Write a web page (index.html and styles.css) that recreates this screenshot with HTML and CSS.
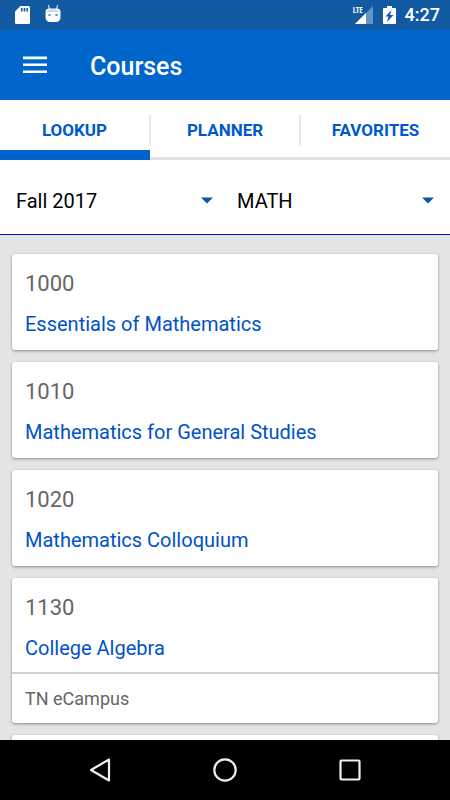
FILE: index.html
```html
<!DOCTYPE html>
<html lang="en">
<head>
<meta charset="utf-8">
<meta name="viewport" content="width=device-width, initial-scale=1">
<title>Courses</title>
<link rel="stylesheet" href="styles.css">
</head>
<body>
<div class="status-bar">
  <svg width="16" height="18" viewBox="0 0 16 18" aria-hidden="true">
    <path fill="#fff" d="M5.500 0H13.500Q15 0 15 1.500V16.500Q15 18 13.500 18H1.500Q0 18 0 16.500V5.500Z"/>
    <path fill="#125ba3" d="M6 2h1.600v3.500H6zM8.700 2h1.600v3.500H8.700zM11.400 2h1.600v3.500h-1.600z"/>
  </svg>
  <svg class="android" width="16" height="18" viewBox="0 0 16 18" aria-hidden="true">
    <path stroke="#fff" stroke-width="1" stroke-linecap="round" d="M3.500 -.5L4.500 3M12.500 -.5L11.500 3"/>
    <path fill="#fff" d="M.5 6Q.5 2.500 4 2.500H12Q15.500 2.500 15.500 6V11Q15.500 16 10.500 16H5.500Q.5 16 .5 11Z"/>
    <path fill="#c5d8ea" d="M2 6Q2.500 3.500 5 3.500H11Q13.500 3.500 14 6Z"/>
    <path fill="#4f85ba" d="M3.500 8h2v2h-2zM10.500 8h2v2h-2z"/>
  </svg>
  <span class="spacer"></span>
  <span class="signal">
    <span class="network">LTE</span>
    <svg width="18" height="18" viewBox="0 0 18 18" aria-hidden="true">
      <path fill="#6595c4" d="M18 0V18H0Z"/>
      <path fill="#fff" d="M11 7V18H0Z"/>
    </svg>
  </span>
  <svg class="battery" width="13" height="18" viewBox="0 0 13 18" aria-hidden="true">
    <path fill="#fff" d="M4 0H9V2H12Q13 2 13 3V17Q13 18 12 18H1Q0 18 0 17V3Q0 2 1 2H4Z"/>
    <path fill="#125ba3" d="M8.500 4L2.500 10.500H5.500L4 16L10.500 9H7Z"/>
  </svg>
  <time class="clock">4:27</time>
</div>

<header class="app-bar">
  <button class="menu-button" type="button" aria-label="Open menu">
    <svg width="24" height="18" viewBox="0 0 24 18" aria-hidden="true">
      <path fill="#fff" d="M0 .6H24V3.200H0zM0 7.500H24V10.100H0zM0 14.400H24V17H0z"/>
    </svg>
  </button>
  <h1>Courses</h1>
</header>

<nav class="tabs">
  <a class="tab active" href="#lookup" aria-current="page"><span>LOOKUP</span></a>
  <a class="tab" href="#planner"><span>PLANNER</span></a>
  <a class="tab" href="#favorites"><span>FAVORITES</span></a>
</nav>

<form class="filters">
  <div class="field">
    <select aria-label="Term"><option>Fall 2017</option></select>
    <svg width="12" height="7" viewBox="0 0 12 7" aria-hidden="true"><path fill="#0d55a8" d="M0 .5H12L6 6.500Z"/></svg>
  </div>
  <div class="field">
    <select aria-label="Subject"><option>MATH</option></select>
    <svg width="12" height="7" viewBox="0 0 12 7" aria-hidden="true"><path fill="#0d55a8" d="M0 .5H12L6 6.500Z"/></svg>
  </div>
</form>

<main class="courses">
  <article class="card">
    <div class="course"><p>1000</p><h2><a href="#1000">Essentials of Mathematics</a></h2></div>
  </article>
  <article class="card">
    <div class="course"><p>1010</p><h2><a href="#1010">Mathematics for General Studies</a></h2></div>
  </article>
  <article class="card">
    <div class="course"><p>1020</p><h2><a href="#1020">Mathematics Colloquium</a></h2></div>
  </article>
  <article class="card">
    <div class="course divided"><p>1130</p><h2><a href="#1130">College Algebra</a></h2></div>
    <p class="campus">TN eCampus</p>
  </article>
  <article class="card"><div class="course"></div></article>
</main>

<footer class="system-nav">
  <button type="button" aria-label="Back">
    <svg width="24" height="26" viewBox="0 0 24 26" aria-hidden="true"><path fill="none" stroke="#eee" stroke-width="2.200" stroke-linejoin="round" d="M21 2.500V23.500L3 13Z"/></svg>
  </button>
  <button type="button" aria-label="Home">
    <svg width="24" height="24" viewBox="0 0 24 24" aria-hidden="true"><circle cx="12" cy="12" r="10.700" fill="none" stroke="#eee" stroke-width="2.200"/></svg>
  </button>
  <button type="button" aria-label="Recent apps">
    <svg width="22" height="22" viewBox="0 0 22 22" aria-hidden="true"><rect x="1.500" y="1.500" width="19" height="19" rx="1" fill="none" stroke="#eee" stroke-width="2.200"/></svg>
  </button>
</footer>
</body>
</html>
```
FILE: styles.css
```css
* {
  box-sizing: border-box;
}

body {
  margin: 0;
  height: 100vh;
  display: flex;
  flex-direction: column;
  background: #e4e4e4;
  color: #000;
  font-family: Roboto, "Liberation Sans", sans-serif;
}

h1, h2, p {
  margin: 0;
}

a {
  color: inherit;
  text-decoration: none;
}

button {
  display: flex;
  align-items: center;
  justify-content: center;
  padding: 0;
  border: 0;
  background: none;
}

svg {
  display: block;
  flex: none;
  overflow: visible;
}

.status-bar {
  flex: none;
  display: flex;
  align-items: center;
  height: 30px;
  padding: 0 10px 0 15px;
  background: #125ba3;
  color: #fff;
}

.android {
  margin-left: 14px;
}

.spacer {
  flex: 1;
}

.signal {
  position: relative;
}

.network {
  position: absolute;
  top: 0;
  right: 10px;
  font-family: "Open Sans Condensed", Roboto, sans-serif;
  font-size: 8px;
  font-weight: 700;
  line-height: 8px;
}

.battery {
  margin: 0 9px 0 10px;
}

.clock {
  font-size: 18px;
  font-weight: 500;
  line-height: 32px;
}

.app-bar {
  flex: none;
  display: flex;
  align-items: center;
  height: 70px;
  padding-left: 11px;
  background: #0066cc;
  color: #fff;
}

.menu-button {
  width: 48px;
  height: 48px;
}

.app-bar h1 {
  margin-left: 31px;
  padding-top: 3px;
  font-size: 25px;
  font-weight: 500;
  line-height: 32px;
}

.tabs {
  flex: none;
  display: grid;
  grid-template-columns: repeat(3, 1fr);
  height: 60px;
  background: #fff;
  color: #0059cc;
  font-size: 17px;
  font-weight: 700;
}

.tab {
  display: flex;
  align-items: center;
  border-bottom: 3px solid #e4e4e4;
  padding-top: 3px;
}

.tab span {
  flex: 1;
  line-height: 30px;
  text-align: center;
  border-right: 1px solid #e8e8e8;
}

.tab + .tab span {
  border-left: 1px solid #e8e8e8;
}

.tab:last-child span {
  border-right: 0;
}

.tab.active {
  padding-top: 10px;
  border-bottom: 10px solid #0061cc;
}

.filters {
  flex: none;
  display: grid;
  grid-template-columns: 1fr 1fr;
  gap: 24px;
  height: 75px;
  padding: 7px 16px 0;
  background: #fff;
  border-bottom: 1px solid #0015c0;
}

.field {
  display: grid;
  align-items: center;
}

.field > * {
  grid-area: 1 / 1;
}

.field svg {
  justify-self: end;
  pointer-events: none;
}

select {
  width: 100%;
  height: 48px;
  padding: 0;
  border: 0;
  appearance: none;
  background: none;
  color: #000;
  font: 20px Roboto, "Liberation Sans", sans-serif;
}

.courses {
  flex: 1;
  min-height: 0;
  overflow: hidden;
  padding: 19px 12px 0;
}

.card {
  margin-bottom: 12px;
  border-radius: 3px;
  background: #fff;
  box-shadow: 0 1px 3px rgba(0, 0, 0, 0.4);
}

.course {
  height: 96px;
  padding: 14px 13px 0;
}

.course p {
  color: #666;
  font-size: 22px;
  line-height: 32px;
}

.course h2 {
  margin-top: 8px;
  color: #0052c8;
  font-size: 20px;
  font-weight: 400;
  line-height: 32px;
}

.divided {
  border-bottom: 2px solid #d0d0d0;
}

.campus {
  padding: 0 13px;
  color: #666;
  font-size: 18px;
  line-height: 49px;
}

.system-nav {
  flex: none;
  display: grid;
  grid-template-columns: repeat(3, 1fr);
  height: 60px;
  padding: 0 38px;
  background: #000;
}
```
